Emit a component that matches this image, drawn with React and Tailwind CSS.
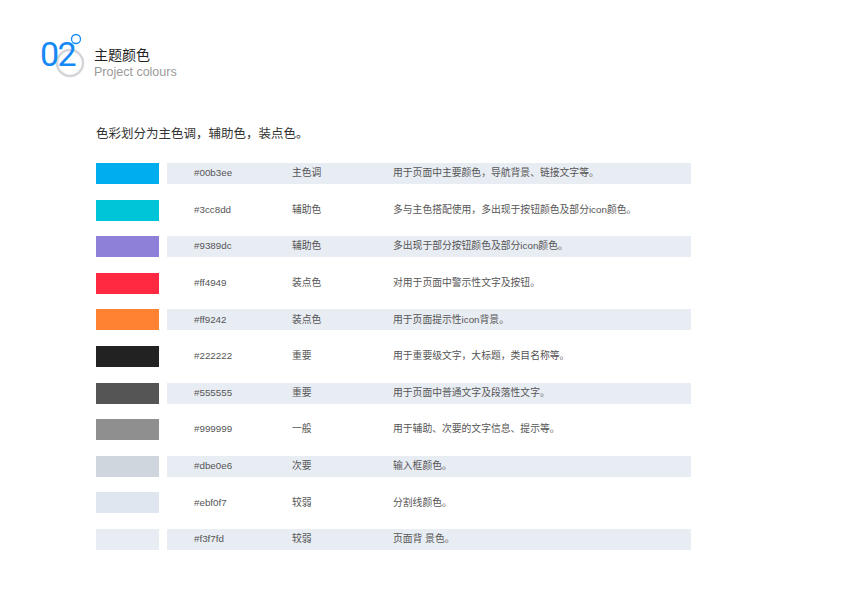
const rows = [
  { swatch: 'bg-[#00aeef]', hex: '#00b3ee', name: '主色调', desc: '用于页面中主要颜色，导航背景、链接文字等。', bar: true },
  { swatch: 'bg-[#00c4d8]', hex: '#3cc8dd', name: '辅助色', desc: '多与主色搭配使用，多出现于按钮颜色及部分icon颜色。', bar: false },
  { swatch: 'bg-[#8e7fd8]', hex: '#9389dc', name: '辅助色', desc: '多出现于部分按钮颜色及部分icon颜色。', bar: true },
  { swatch: 'bg-[#ff2941]', hex: '#ff4949', name: '装点色', desc: '对用于页面中警示性文字及按钮。', bar: false },
  { swatch: 'bg-[#ff8132]', hex: '#ff9242', name: '装点色', desc: '用于页面提示性icon背景。', bar: true },
  { swatch: 'bg-[#222222]', hex: '#222222', name: '重要', desc: '用于重要级文字，大标题，类目名称等。', bar: false },
  { swatch: 'bg-[#555555]', hex: '#555555', name: '重要', desc: '用于页面中普通文字及段落性文字。', bar: true },
  { swatch: 'bg-[#8f8f8f]', hex: '#999999', name: '一般', desc: '用于辅助、次要的文字信息、提示等。', bar: false },
  { swatch: 'bg-[#cfd6de]', hex: '#dbe0e6', name: '次要', desc: '输入框颜色。', bar: true },
  { swatch: 'bg-[#dfe6ef]', hex: '#ebf0f7', name: '较弱', desc: '分割线颜色。', bar: false },
  { swatch: 'bg-[#e8ecf3]', hex: '#f3f7fd', name: '较弱', desc: '页面背 景色。', bar: true },
];

function Logo() {
  return (
    <div className="relative w-[54px] h-[50px] shrink-0">
      <svg className="absolute left-0 top-0" width="54" height="50" viewBox="0 0 54 50">
        <circle cx="30" cy="30" r="13" fill="none" stroke="#d4d5d8" strokeWidth="2.5" />
        <circle cx="36" cy="6" r="4.5" fill="none" stroke="#1589f5" strokeWidth="1.3" />
      </svg>
      <span
        className="relative block pt-[4px] text-[34px] leading-none font-normal tracking-[-1.5px] text-[#1589f5]"
        style={{ fontFamily: 'Roboto, "Liberation Sans", sans-serif' }}
      >
        02
      </span>
    </div>
  );
}

export default function App() {
  return (
    <div
      className="w-[849px] h-[600px] bg-white overflow-hidden"
      style={{ fontFamily: '"Liberation Sans", "Noto Sans CJK SC", sans-serif' }}
    >
      <div className="flex pl-[40px] pt-[33px]">
        <Logo />
        <div className="flex flex-col pt-[13px]">
          <span className="text-[14px] leading-[18px] text-[#222]">主题颜色</span>
          <span className="text-[12.5px] leading-[16px] text-[#9a9a9a]">Project colours</span>
        </div>
      </div>

      <p className="ml-[96px] mt-[43px] text-[12.5px] leading-[16px] text-[#333]">色彩划分为主色调，辅助色，装点色。</p>

      <div className="ml-[96px] mt-[21px] flex flex-col gap-[15.6px]">
        {rows.map((r, i) => (
          <div key={i} className="flex h-[21px] gap-[8px]">
            <div className={`w-[63px] h-full ${r.swatch}`} />
            <div className={`flex items-center w-[524px] h-full pl-[27px] text-[9.8px] text-[#555] ${r.bar ? 'bg-[#e8ecf3]' : ''}`}>
              <span className="w-[98px]">{r.hex}</span>
              <span className="w-[101px]">{r.name}</span>
              <span>{r.desc}</span>
            </div>
          </div>
        ))}
      </div>
    </div>
  );
}
